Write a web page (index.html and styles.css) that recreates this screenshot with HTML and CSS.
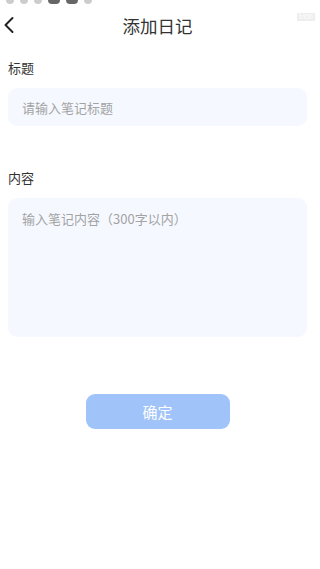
FILE: index.html
```html
<!DOCTYPE html>
<html lang="zh-CN">
<head>
    <meta charset="UTF-8">
    <meta name="viewport" content="width=device-width, initial-scale=1.0">
    <title>添加日记</title>
    <link rel="stylesheet" href="styles.css">
</head>
<body>

    <div class="status">
        <span class="dot"></span><span class="dot"></span><span class="dot"></span>
        <span class="dot big"></span><span class="dot big"></span><span class="dot"></span>
        <span class="tag">b95h</span>
    </div>

    <div class="nav">
        <span class="back">
            <svg width="12" height="18" viewBox="0 0 12 18">
                <path d="M9.5 2 L2.5 9 L9.5 16" fill="none" stroke="#222" stroke-width="2" stroke-linecap="round" stroke-linejoin="round"/>
            </svg>
        </span>
        <h1>添加日记</h1>
    </div>

    <form class="note-form">
        <label for="title">标题</label>
        <input type="text" id="title" placeholder="请输入笔记标题">

        <label for="content" class="second">内容</label>
        <textarea id="content" placeholder="输入笔记内容（300字以内）"></textarea>

        <button type="button">确定</button>
    </form>

</body>
</html>
```

FILE: styles.css
```css
body {
    margin: 0;
    font-family: "Noto Sans CJK SC", "Noto Sans", sans-serif;
    background: #fff;
    color: #333;
}

.status {
    height: 10px;
    position: relative;
    display: flex;
    gap: 6px;
    padding-left: 6px;
}

.dot {
    width: 8px;
    height: 4px;
    border-radius: 0 0 4px 4px;
    background: #ccc;
}

.dot.big {
    width: 12px;
    background: #666;
}

.tag {
    position: absolute;
    right: 5px;
    top: 13px;
    font-size: 6px;
    line-height: 8px;
    padding: 0 2px;
    background: #eee;
    color: #fff;
}

.nav {
    height: 30px;
    display: flex;
    align-items: center;
    justify-content: center;
    position: relative;
}

.back {
    position: absolute;
    left: 3px;
    top: 5px;
}

h1 {
    margin: 0 0 0 -5px;
    font-size: 17.5px;
    font-weight: normal;
    color: #333;
}

.note-form {
    padding: 0 13px 0 8px;
    display: flex;
    flex-direction: column;
}

label {
    font-size: 13px;
    line-height: 18px;
    color: #333;
    margin-top: 19px;
    margin-bottom: 11px;
}

label.second {
    margin-top: 43px;
}

input, textarea {
    border: none;
    outline: none;
    background: #f5f9ff;
    border-radius: 9px;
    font-family: inherit;
    font-size: 13px;
    color: #333;
    padding: 0 14px;
    box-sizing: border-box;
    width: 100%;
}

input {
    height: 38px;
}

textarea {
    height: 139px;
    padding-top: 12px;
    resize: none;
    line-height: 18px;
}

input::placeholder, textarea::placeholder {
    color: #a3a3a3;
}

button {
    align-self: center;
    margin-top: 57px;
    width: 144px;
    height: 35px;
    border: none;
    border-radius: 9px;
    background: #a0c4f9;
    color: #fff;
    font-family: inherit;
    font-size: 15px;
}
```
